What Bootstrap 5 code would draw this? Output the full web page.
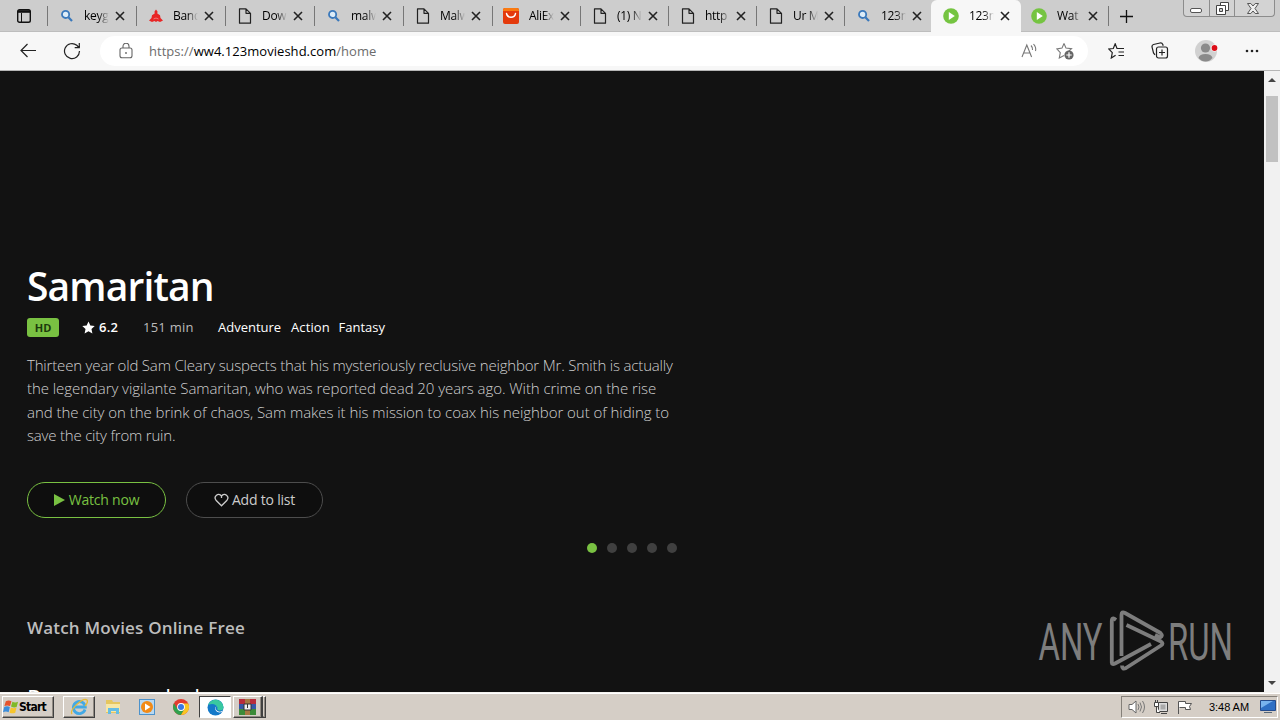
<!DOCTYPE html>
<html lang="en">
<head>
<meta charset="utf-8">
<title>123movies</title>
<meta name="viewport" content="width=device-width, initial-scale=1">
<link href="https://cdn.jsdelivr.net/npm/bootstrap@5.3.0/dist/css/bootstrap.min.css" rel="stylesheet">
<style>
body{font-family:"Open Sans","Noto Sans",sans-serif;height:720px;overflow:hidden;background:#121212;color:#000}
svg{display:block;flex:none}
.sprite{width:0;height:0;display:none}
/* tab strip */
.tabstrip{height:32px;background:#cdcdcd;border-bottom:1px solid #bdbdbd}
.strip-menu{width:47px;padding-left:17px}
.tab{width:88px;height:31px;padding-left:12px;border-left:1px solid transparent;position:relative}
.tab::before{content:"";position:absolute;left:-1px;top:6px;height:20px;width:1px;background:#777}
.tab.wide{width:89px}
.tab.ali{padding-left:10px}
.tab.on{height:32px;width:90px;background:#f7f7f7;border-radius:6px 6px 0 0;margin-left:-1px;border:0;padding-left:12px}
.tab.after{padding-left:9px;width:87px}
.tab.on::before,.tab.after::before{display:none}
.tab-label{font-size:12px;letter-spacing:-.3px;width:26px;margin-left:10px;white-space:nowrap;overflow:hidden;-webkit-mask-image:linear-gradient(90deg,#000 55%,transparent 96%)}
.tab-x{margin-left:5px}
.plus{width:38px;border-left:1px solid #777;height:20px;margin-top:6px;padding-left:10px}
.winctl{width:92px;height:17px;margin-left:37px;border:1px solid #8c8c8c;border-top:0;border-radius:0 0 4px 4px;background:#d3d3d3}
.winctl>span+span{border-left:1px solid #8c8c8c}
/* toolbar */
.toolbar{height:39px;background:#f7f7f7;border-bottom:1px solid #b5b5b5}
.address{width:988px;height:30px;background:#fff;border-radius:15px;margin-left:20px;padding:0 14px 0 18px}
.url{font-size:13px;margin-left:15px;padding-top:1px;color:#6c6c6c;letter-spacing:.04px}
.url b{font-weight:400;color:#000}
/* page */
.viewport{height:621px}
.site{background:#121212;color:#fff;padding:192px 0 0 27px;position:relative;overflow:hidden}
.site h1{font-size:39px;font-weight:600;line-height:46px;margin:0;letter-spacing:-.85px}
.meta{height:20px;margin-top:8px;font-size:13px;line-height:20px}
.hd{width:32px;height:19px;border-radius:3px;background:#79c142;color:#1c3a0c;font-size:11px;font-weight:700;line-height:19px}
.plot{font-size:15px;font-weight:300;line-height:23.4px;color:#d0d0d0;margin:17px 0 0;white-space:nowrap}
.plot span{display:block}
.l1{letter-spacing:-.175px}.l2{letter-spacing:-.065px}.l3{letter-spacing:-.05px}.l4{letter-spacing:-.2px}
.pill{height:36px;border:1px solid #79c142;border-radius:18px;color:#79c142;font-size:14px;background:#0e0e0e;letter-spacing:-.2px}
.pill.ghost{border-color:#4d4d4d;color:#ccc}
.actions{margin-top:34px}
.dots{margin:25px 0 0 560px;height:10px}
.dots i{width:10px;height:10px;border-radius:50%;background:#404040}
.dots i.on{background:#79c142}
.heading{font-size:17px;font-weight:600;color:#bdbdbd;line-height:24px;margin:63px 0 0;letter-spacing:.19px}
.next{font-size:23px;font-weight:400;line-height:30px;margin:43px 0 0;white-space:nowrap;letter-spacing:1.05px}
.watermark{position:absolute;left:1034px;top:536px;font-family:Roboto,sans-serif;font-size:52px}
.rail{width:16px;background:#f1f1f1;padding:6px 2px}
.thumb{width:12px;height:66px;background:#c1c1c1;margin:13px auto 0}
/* taskbar */
.taskbar{height:28px;background:#d5cec6;border-top:1px solid #f4f2ee;position:relative;padding:3px 2px 0;box-shadow:inset 0 1px #fff}
.raised{border:1px solid;border-color:#fff #404040 #404040 #fff;box-shadow:inset -1px -1px #918b83}
.start{width:52px;height:22px;font:bold 12px "DejaVu Sans Condensed","DejaVu Sans",sans-serif;letter-spacing:-.75px}
.tray{width:157px;height:22px;border:1px solid;border-color:#858079 #fff #fff #858079;font:11px "Liberation Sans",sans-serif;padding-left:6px}
.task{width:32px;height:22px}
.task.open{background:#fff;border:1px solid;border-color:#404040 #fff #fff #404040}
</style>
</head>
<body>
<svg class="sprite">
  <symbol id="find" viewBox="0 0 14 14"><circle cx="5.6" cy="5.4" r="3.6" fill="#dcecf8" stroke="#3978bb" stroke-width="1.8"/><path d="M8.4 8.2 12 12" stroke="#3978bb" stroke-width="2.2"/></symbol>
  <symbol id="page" viewBox="0 0 14 16"><path d="M1.5.8H8l4.500 4.500v9.900h-11zM8 .8v4.500h4.500" fill="none" stroke="#222" stroke-width="1.200" stroke-linejoin="round"/></symbol>
  <symbol id="bandit" viewBox="0 0 14 14"><path d="M7 .5 8.500 2.500 8.300 4.500 11 6.300 11.500 9 14 11.500 11 13 8.500 12 7 13 5.500 12 3 13 0 11.500 2.500 9 3 6.300 5.700 4.500 5.500 2.500Z" fill="#e82626"/><path d="m4.500 10 2.500-1 2.500 1" fill="none" stroke="#f39b9b" stroke-width=".7"/></symbol>
  <symbol id="ali" viewBox="0 0 16 16"><rect width="16" height="16" rx="2" fill="#e43a0c"/><path d="M0 3V2a2 2 0 0 1 2-2h12a2 2 0 0 1 2 2v1z" fill="#fa7a10"/><path d="M3.500 5.500c1 5 8 5 9 0" fill="none" stroke="#fff" stroke-width="1.400" stroke-linecap="round"/></symbol>
  <symbol id="movie" viewBox="0 0 16 16"><circle cx="8" cy="8" r="7.800" fill="#75c441"/><path d="m5.800 4 6 4-6 4z" fill="#fff"/></symbol>
  <symbol id="close" viewBox="0 0 10 10"><path d="m1 1 8 8M9 1 1 9" stroke="#222" stroke-width="1.600"/></symbol>
</svg>

<div class="tabstrip d-flex">
  <div class="strip-menu d-flex align-items-center"><svg width="14" height="14" viewBox="0 0 14 14" fill="none" stroke="#111"><rect x=".7" y=".7" width="12.600" height="12.600" rx="1.800" stroke-width="1.400"/><path d="M1 2.500h12" stroke-width="2.600"/><path d="M4.500 4v9"/></svg></div>
  <div class="tab wide d-flex align-items-center"><svg width="14" height="14"><use href="#find"/></svg><span class="tab-label">keygen</span><svg class="tab-x" width="10" height="10"><use href="#close"/></svg></div>
  <div class="tab wide d-flex align-items-center"><svg width="14" height="14"><use href="#bandit"/></svg><span class="tab-label">Bandi</span><svg class="tab-x" width="10" height="10"><use href="#close"/></svg></div>
  <div class="tab wide d-flex align-items-center"><svg width="14" height="16"><use href="#page"/></svg><span class="tab-label">Dow</span><svg class="tab-x" width="10" height="10"><use href="#close"/></svg></div>
  <div class="tab wide d-flex align-items-center"><svg width="14" height="14"><use href="#find"/></svg><span class="tab-label">malw</span><svg class="tab-x" width="10" height="10"><use href="#close"/></svg></div>
  <div class="tab wide d-flex align-items-center"><svg width="14" height="16"><use href="#page"/></svg><span class="tab-label">Malw</span><svg class="tab-x" width="10" height="10"><use href="#close"/></svg></div>
  <div class="tab ali d-flex align-items-center"><svg width="16" height="16"><use href="#ali"/></svg><span class="tab-label">AliEx</span><svg class="tab-x" width="10" height="10"><use href="#close"/></svg></div>
  <div class="tab d-flex align-items-center"><svg width="14" height="16"><use href="#page"/></svg><span class="tab-label">(1) N</span><svg class="tab-x" width="10" height="10"><use href="#close"/></svg></div>
  <div class="tab d-flex align-items-center"><svg width="14" height="16"><use href="#page"/></svg><span class="tab-label">http</span><svg class="tab-x" width="10" height="10"><use href="#close"/></svg></div>
  <div class="tab d-flex align-items-center"><svg width="14" height="16"><use href="#page"/></svg><span class="tab-label">Ur M</span><svg class="tab-x" width="10" height="10"><use href="#close"/></svg></div>
  <div class="tab d-flex align-items-center"><svg width="14" height="14"><use href="#find"/></svg><span class="tab-label">123m</span><svg class="tab-x" width="10" height="10"><use href="#close"/></svg></div>
  <div class="tab on d-flex align-items-center"><svg width="16" height="16"><use href="#movie"/></svg><span class="tab-label">123m</span><svg class="tab-x" width="10" height="10"><use href="#close"/></svg></div>
  <div class="tab after d-flex align-items-center"><svg width="16" height="16"><use href="#movie"/></svg><span class="tab-label">Wat</span><svg class="tab-x" width="10" height="10"><use href="#close"/></svg></div>
  <div class="plus d-flex align-items-center"><svg width="15" height="15" viewBox="0 0 15 15"><path d="M7.500 1v13M1 7.500h13" stroke="#111" stroke-width="1.300"/></svg></div>
  <div class="winctl d-flex">
    <span class="d-flex align-items-center justify-content-center" style="width:25px"><svg width="13" height="15" viewBox="0 0 13 15"><rect x=".5" y="7.500" width="11" height="4" rx="1.500" fill="#fff" stroke="#555"/></svg></span>
    <span class="d-flex align-items-center justify-content-center" style="width:25px"><svg width="13" height="13" viewBox="0 0 13 13" fill="#fff" stroke="#444"><path d="M4.500.5h8v8h-8z"/><path d="M.5 3.500h9v9h-9z"/><path d="M3.500 6.500h3v3h-3z" fill="#ccc"/></svg></span>
    <span class="d-flex align-items-center justify-content-center pe-1 flex-fill"><svg width="12" height="11" viewBox="0 0 12 11"><path d="M.5.5h3.300L6 3 8.200.5h3.300L8 5.500l3.500 5H8.200L6 8l-2.200 2.500H.5l3.500-5z" fill="#eee" stroke="#555"/></svg></span>
  </div>
</div>

<div class="toolbar d-flex align-items-center">
  <svg class="ms-3" width="24" height="18" viewBox="0 0 24 18"><path d="M4.500 8.500H20M11.500 2 5 8.500l6.500 6.500" fill="none" stroke="#222" stroke-width="1.200"/></svg>
  <svg width="18" height="18" viewBox="0 0 18 18" style="margin-left:23px"><path d="M16.500 9A7.500 7.500 0 1 1 13.800 3.300L16 5.500M16.300 1v4.700h-4.600" fill="none" stroke="#222" stroke-width="1.200"/></svg>
  <div class="address d-flex align-items-center" style="margin-left:19px">
    <svg width="16" height="16" viewBox="0 0 16 16"><rect x="2" y="5" width="12" height="9.800" rx="2" fill="none" stroke="#666" stroke-width="1.100"/><path d="M5 5V3.200a3 3 0 0 1 6 0V5" fill="none" stroke="#666" stroke-width="1.100"/><circle cx="8" cy="10" r=".9" fill="#666"/></svg>
    <span class="url">https://<b>ww4.123movieshd.com</b>/home</span>
    <svg class="ms-auto" width="18" height="18" viewBox="0 0 18 18" fill="none" stroke="#777" stroke-width="1.100"><path d="M2 15 6.800 3l4.800 12M3.700 11h6.200M11 3.500q2 2 1.500 4.500M13.500 2q3 3.500 2 7"/></svg>
    <svg width="18" height="18" viewBox="0 0 18 18" style="margin-left:18px"><path d="m8 1.500 2 4.600 5.500.5-3.300 3M8 13.400l-4.700 2.500 1-5.300L.8 6.900l5.200-.8 2-4.600" fill="none" stroke="#777" stroke-width="1.100"/><circle cx="13" cy="13" r="4.600" fill="#666"/><path d="M13 10.300v5.400M10.300 13h5.400" stroke="#fff" stroke-width="1.200"/></svg>
  </div>
  <svg width="18" height="16" viewBox="0 0 18 16" style="margin-left:20px"><path d="M11 5.500H9L7.200.8 5.300 5.500.8 6l3.500 3.600-1 5.400 4.300-2.800M10 5.500h6M10.500 9H16M10.500 12.500H16" fill="none" stroke="#222" stroke-width="1.200"/></svg>
  <svg width="18" height="18" viewBox="0 0 18 18" style="margin-left:25px" fill="none" stroke="#222" stroke-width="1.200"><path d="M4 12.800 2.500 11 1 5q-.3-2 1.500-2.500L9 1q2-.4 2.800 1.500l.4 1.300"/><rect x="5.500" y="5" width="11" height="11" rx="2"/><path d="M11 7.500v6M8 10.500h6"/></svg>
  <svg width="25" height="22" viewBox="0 0 25 22" style="margin-left:25px"><circle cx="12" cy="11" r="11" fill="#d1d1d1"/><circle cx="11.500" cy="8" r="4.600" fill="#8a8a8a"/><path d="M4.500 18q1-4 7-4t7 4q-3 3.500-7 3.500T4.500 18" fill="#8a8a8a"/><circle cx="20.500" cy="8" r="3.500" fill="#fff"/><circle cx="20.500" cy="8" r="2.900" fill="#dc0d18"/></svg>
  <svg width="14" height="4" viewBox="0 0 14 4" style="margin-left:26px" fill="#222"><circle cx="2" cy="2" r="1.300"/><circle cx="7" cy="2" r="1.300"/><circle cx="12" cy="2" r="1.300"/></svg>
</div>

<div class="viewport d-flex">
  <main class="site flex-fill">
    <h1>Samaritan</h1>
    <div class="meta d-flex align-items-center">
      <span class="hd text-center">HD</span>
      <svg width="13" height="13" viewBox="0 0 14 14" style="margin-left:23px"><path d="m7 .5 2 4.300 4.700.5-3.500 3.200 1 4.900L7 11l-4.200 2.400 1-4.900L.3 5.300 5 4.800z" fill="#fff"/></svg>
      <span class="fw-semibold" style="width:47px;margin-left:4px;letter-spacing:.3px">6.2</span>
      <span style="width:75px;margin-left:-3px;color:#bbb;letter-spacing:.25px">151 min</span>
      <span style="width:73px">Adventure</span><span style="width:47px;letter-spacing:.1px">Action</span><span style="margin-left:.5px">Fantasy</span>
    </div>
    <p class="plot"><span class="l1">Thirteen year old Sam Cleary suspects that his mysteriously reclusive neighbor Mr. Smith is actually</span><span class="l2">the legendary vigilante Samaritan, who was reported dead 20 years ago. With crime on the rise</span><span class="l3">and the city on the brink of chaos, Sam makes it his mission to coax his neighbor out of hiding to</span><span class="l4">save the city from ruin.</span></p>
    <div class="actions d-flex">
      <div class="pill d-flex align-items-center justify-content-center" style="width:139px"><svg width="11" height="12" viewBox="0 0 11 12" class="me-1"><path d="M0 0v12l11-6z" fill="#79c142"/></svg><span>Watch now</span></div>
      <div class="pill ghost d-flex align-items-center justify-content-center" style="width:137px;margin-left:20px"><svg width="15" height="14" viewBox="0 0 15 14" style="margin-right:3px"><path d="M7.500 12.800 2 7.200C-.8 3.600 4.300-1.200 7.500 3c3.200-4.200 8.300.6 5.500 4.200zM7.500 3v2" fill="none" stroke="#ccc" stroke-width="1.300"/></svg><span>Add to list</span></div>
    </div>
    <div class="dots d-flex" style="gap:10px"><i class="on"></i><i></i><i></i><i></i><i></i></div>
    <h2 class="heading">Watch Movies Online Free</h2>
    <h2 class="next">Recommended</h2>
    <svg class="watermark" width="204" height="68" viewBox="0 0 204 68">
      <text x="4.500" y="53" textLength="64" lengthAdjust="spacingAndGlyphs" fill="#7d7d7d">ANY</text>
      <text x="134" y="53" textLength="65" lengthAdjust="spacingAndGlyphs" fill="#7d7d7d">RUN</text>
      <g fill="none" stroke="#7d7d7d" stroke-width="3.800" stroke-linejoin="round"><path d="M82 13 80 11.500Q77.800 11 77.800 14V55.500Q78 58 81 56.500L117 37"/><path d="M87.500 49V8Q87.500 4 91 6L126.500 26Q129.500 29 126 30.500L121 28"/><path d="m92.500 18 34.500 16.500q3 2 0 4L92 61q-4 2-4-2.500"/></g>
    </svg>
  </main>
  <div class="rail d-flex flex-column">
    <svg class="mx-auto" width="8" height="6"><path d="M0 5 4 1l4 4z" fill="#444"/></svg>
    <div class="thumb"></div>
    <svg class="mx-auto mt-auto" width="8" height="6"><path d="M0 1h8L4 5z" fill="#444"/></svg>
  </div>
</div>

<footer class="taskbar d-flex">
  <div class="start raised d-flex align-items-center"><svg width="16" height="16" viewBox="0 0 17 16"><path d="M3 2q3-2 6 0L7.500 7q-3-1-6 0z" fill="#e5532d"/><path d="M10 2.500q3 1.500 6 0L14.500 8q-3 1-6-.5z" fill="#80b928"/><path d="M1.300 8q3-1.500 6 0L6 13.500q-3-1.500-6 0z" fill="#3b8ddb"/><path d="M8.300 8.500q3 1.500 6 0L13 14q-3 1.500-6 0z" fill="#f7c52d"/></svg><span>Start</span></div>
  <div class="task raised d-flex align-items-center justify-content-center" style="margin-left:9px"><svg width="18" height="18" viewBox="0 0 18 18"><path d="M15 11.500A6 6 0 1 1 15.300 9H5" fill="none" stroke="#43a9e5" stroke-width="2.800"/><path d="M2 16C-1 12 13-1 17 2q1.500 2-2 6" fill="none" stroke="#e8bb35" stroke-width="1.300"/></svg></div>
  <div class="task d-flex align-items-center justify-content-center" style="margin-left:2px"><svg width="17" height="16" viewBox="0 0 17 16"><path d="M1 3V1h6l1 2h7v11H1z" fill="#e5c65f"/><path d="M1 5h14v8H1z" fill="#f7e7a5"/><path d="M3 15V9h11v6h-3v-3H6v3z" fill="#65bde4"/></svg></div>
  <div class="task d-flex align-items-center justify-content-center" style="margin-left:2px"><svg width="16" height="16" viewBox="0 0 16 16"><rect x=".5" y=".5" width="15" height="15" fill="#b8d8f1" stroke="#4c92cb"/><circle cx="8" cy="8" r="6" fill="#f28a16"/><path d="m6 4.500 5.500 3.500L6 11.500z" fill="#fff"/></svg></div>
  <div class="task d-flex align-items-center justify-content-center" style="margin-left:2px"><svg width="16" height="16" viewBox="0 0 16 16"><circle cx="8" cy="8" r="8" fill="#e23c2f"/><path d="M1 4.200A8 8 0 0 0 8 16l3.500-6L8 8 4.500 10z" fill="#30a14e"/><path d="M8 4.400h7.200A8 8 0 0 1 8 16l3.500-6z" fill="#f9c623"/><circle cx="8" cy="8" r="3.900" fill="#fff"/><circle cx="8" cy="8" r="3" fill="#3978e3"/></svg></div>
  <div class="task open d-flex align-items-center justify-content-center" style="margin-left:2px"><svg width="17" height="17" viewBox="0 0 17 17"><circle cx="8.500" cy="8.500" r="8" fill="#1479c9"/><path d="M1 6A8 8 0 0 1 16.500 8q0 3.500-4 3.500-3 0-2-3Q8 3 1 6" fill="#39c8a0"/><path d="M9.500 7q-2 3 1 5 3 1.500 5.500-.5l-1 1.500q-5 1.500-6.500-2Q7.500 8.500 9.500 7" fill="#fff"/></svg></div>
  <div class="task raised d-flex align-items-center justify-content-center" style="margin-left:2px;width:30px;border-right-width:2px"><svg width="17" height="16" viewBox="0 0 17 16"><path d="M0 0h17v5H0z" fill="#b72c3c"/><path d="M0 5h17v5H0z" fill="#3657a7"/><path d="M0 10h17v6H0z" fill="#3c8b39"/><path d="M6 0h5v16H6z" fill="#a77842"/><path d="M5 5h7v6H5z" fill="#eee" stroke="#333"/><path d="M8.500 5v4" stroke="#333"/></svg></div><div class="raised" style="width:3px;height:22px;border-left:0"></div>
  <div class="tray ms-auto d-flex align-items-center">
    <svg width="18" height="14" viewBox="0 0 18 14"><path d="M1 4.500h3L8 1v12L4 9.500H1z" fill="#fff" stroke="#666"/><path d="M10 4q2 3 0 6M12 2.500q3 4.500 0 9M14.500 1q4 6 0 12" fill="none" stroke="#777"/></svg>
    <svg width="16" height="15" viewBox="0 0 16 15" style="margin-left:7px"><path d="M5.500 2.500h9v9h-9z" fill="#ddd" stroke="#444"/><path d="M7.500 4.500h5v5h-5z" fill="#aaa"/><path d="M8 13.500h6M1.500 2.500h4v4h-4zM3.500 6.500v6H7M2.500 0v2M4.500 0v2" fill="#fff" stroke="#444"/></svg>
    <svg width="17" height="15" viewBox="0 0 17 15" style="margin-left:8px"><path d="M1.500 14V1.500h7v2h6l-2 3 1 3h-5v-2h-6" fill="#fff" stroke="#555"/></svg>
    <span style="margin-left:15px;white-space:nowrap;letter-spacing:-.05px;width:43px">3:48 AM</span>
    <svg width="16" height="14" viewBox="0 0 16 14" style="margin-left:8px"><path d="M.5.5h15v10H.5z" fill="#2e6fc4" stroke="#244b8c"/><path d="M1 1h12L1 8z" fill="#78b3ee"/><path d="M4 12.500h8" stroke="#567"/></svg>
  </div>
</footer>
<script src="https://cdn.jsdelivr.net/npm/bootstrap@5.3.0/dist/js/bootstrap.bundle.min.js"></script>
</body>
</html>
